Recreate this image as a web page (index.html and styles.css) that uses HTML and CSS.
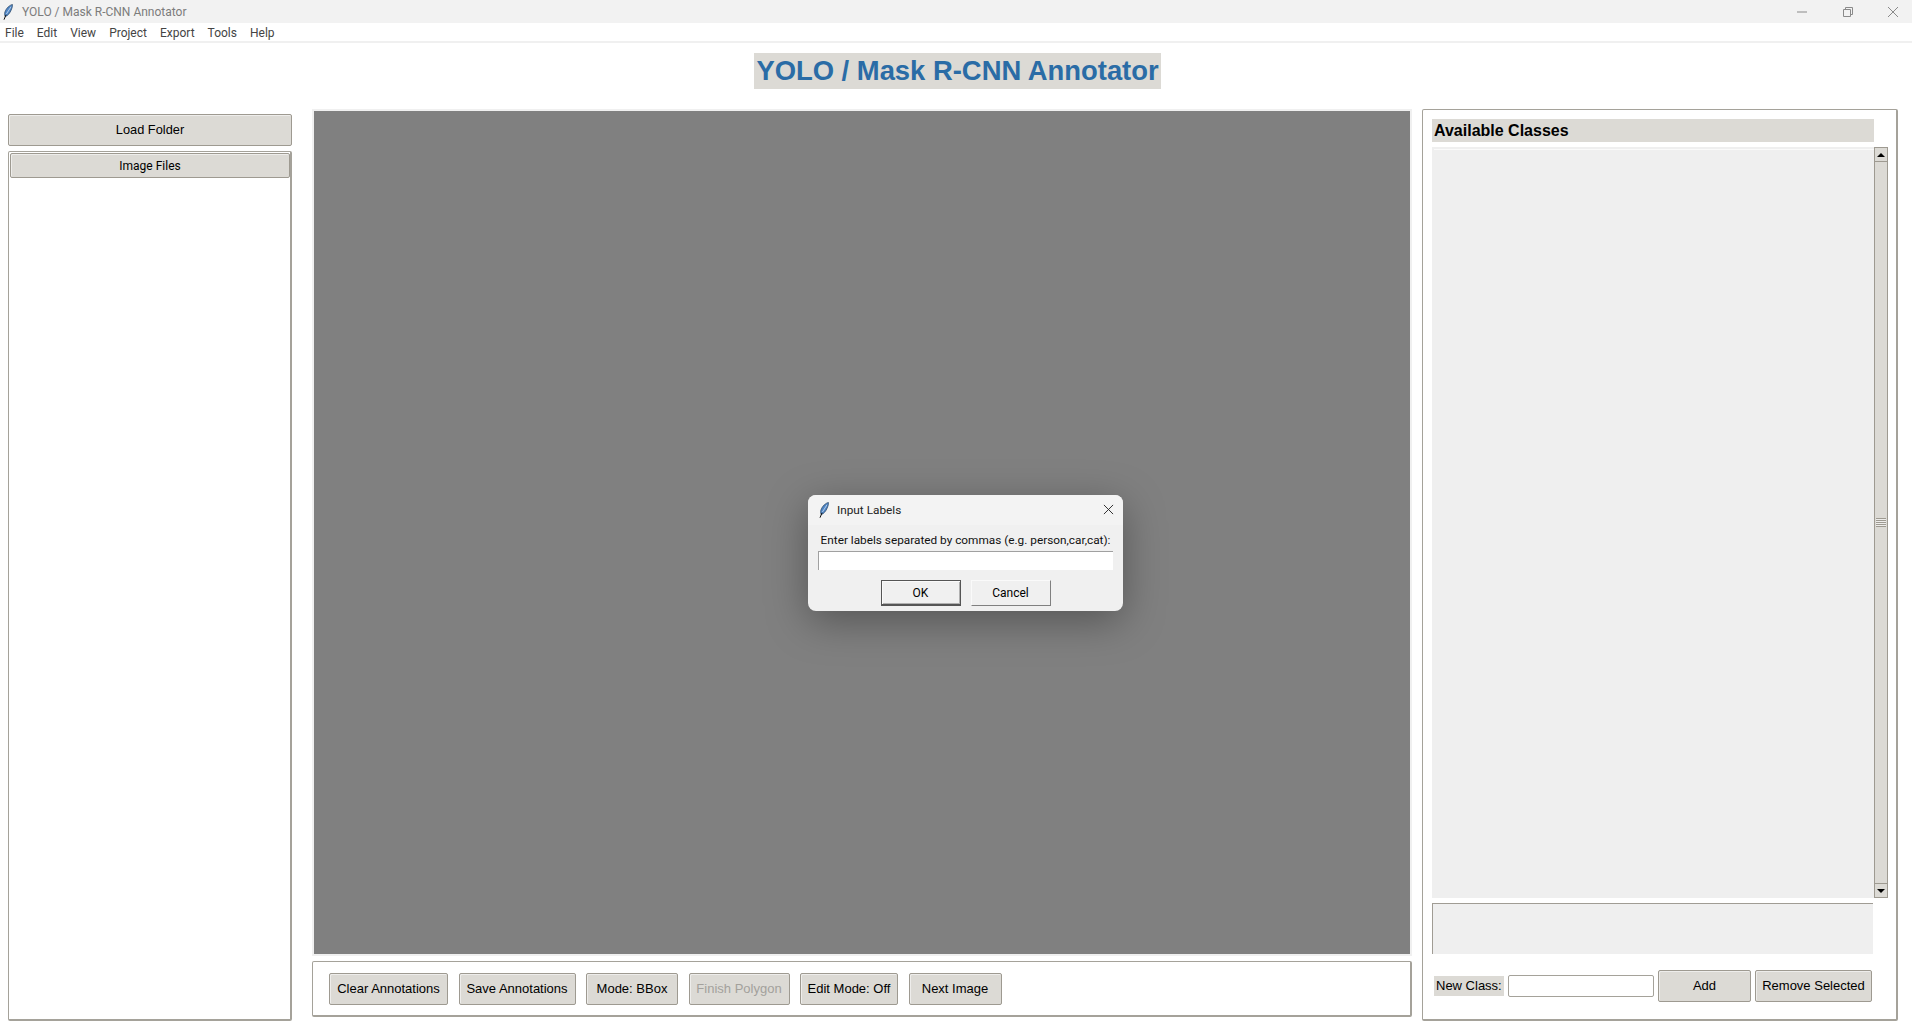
FILE: index.html
```html
<!DOCTYPE html>
<html lang="en">
<head>
    <meta charset="UTF-8">
    <meta name="viewport" content="width=device-width, initial-scale=1.0">
    <title>YOLO / Mask R-CNN Annotator</title>
    <link rel="stylesheet" href="styles.css">
</head>
<body>
    <!-- Window chrome -->
    <div class="titlebar">
        <svg class="feather" viewBox="0 0 10 16"><path d="M9.400 .4C6.600 1.200 3.200 4 1.900 8 1.400 10 1.500 11.500 2.300 12.600 4.800 11.800 7 9 8.200 6 9.200 3.600 9.700 1.700 9.400 .4z" fill="#4f86c6" stroke="#24405f" stroke-width=".7"/><path d="M8 2.800 3.400 10" stroke="#dfeaf6" stroke-width=".7" fill="none"/><path d="M1 15.700 3 10.800" stroke="#111" stroke-width="1" fill="none"/></svg>
        <span class="titlebar-text">YOLO / Mask R-CNN Annotator</span>
        <div class="window-controls">
            <svg viewBox="0 0 12 12"><path d="M1 6h10" stroke="#8a8a8a" fill="none"/></svg>
            <svg viewBox="0 0 12 12"><path d="M1.500 3.500h7v7h-7zM3.500 3.500v-2h7v7h-2" stroke="#8a8a8a" fill="none"/></svg>
            <svg viewBox="0 0 12 12"><path d="M1 1l10 10M11 1L1 11" stroke="#8a8a8a" fill="none"/></svg>
        </div>
    </div>
    <div class="menubar">
        <span>File</span><span>Edit</span><span>View</span><span>Project</span><span>Export</span><span>Tools</span><span>Help</span>
    </div>

    <div class="heading"><h1>YOLO / Mask R-CNN Annotator</h1></div>

    <div class="main">
        <!-- Left column -->
        <div class="left-col">
            <button class="btn load-btn">Load Folder</button>
            <div class="file-panel">
                <div class="btn file-head">Image Files</div>
            </div>
        </div>

        <!-- Canvas and toolbar -->
        <div class="center-col">
            <div class="canvas"></div>
            <div class="toolbar">
                <button class="btn tool-btn w-clear">Clear Annotations</button>
                <button class="btn tool-btn w-save">Save Annotations</button>
                <button class="btn tool-btn w-mode">Mode: BBox</button>
                <button class="btn tool-btn w-finish" disabled>Finish Polygon</button>
                <button class="btn tool-btn w-edit">Edit Mode: Off</button>
                <button class="btn tool-btn w-next">Next Image</button>
            </div>
        </div>

        <!-- Class panel -->
        <div class="right-col">
            <div class="classes-head">Available Classes</div>
            <div class="classes-row">
                <div class="classes-list"><div class="classes-inner"></div></div>
                <div class="scrollbar">
                    <div class="scroll-arrow"><span class="arrow-up"></span></div>
                    <div class="scroll-thumb"><span class="grip"></span></div>
                    <div class="scroll-arrow"><span class="arrow-down"></span></div>
                </div>
            </div>
            <div class="class-info"></div>
            <div class="add-row">
                <label class="new-label" for="newClass">New Class:</label>
                <input class="new-input" id="newClass" type="text">
                <button class="btn add-btn">Add</button>
                <button class="btn remove-btn">Remove Selected</button>
            </div>
        </div>
    </div>

    <!-- Dialog on top of the window -->
    <div class="dialog">
        <div class="dialog-title">
            <svg class="feather" viewBox="0 0 10 16"><path d="M9.400 .4C6.600 1.200 3.200 4 1.900 8 1.400 10 1.500 11.500 2.300 12.600 4.800 11.800 7 9 8.200 6 9.200 3.600 9.700 1.700 9.400 .4z" fill="#4f86c6" stroke="#24405f" stroke-width=".7"/><path d="M8 2.800 3.400 10" stroke="#dfeaf6" stroke-width=".7" fill="none"/><path d="M1 15.700 3 10.800" stroke="#111" stroke-width="1" fill="none"/></svg>
            <span class="dialog-title-text">Input Labels</span>
            <svg class="dialog-close" viewBox="0 0 12 12"><path d="M1 1l10 10M11 1L1 11" stroke="#222" fill="none"/></svg>
        </div>
        <div class="dialog-body">
            <div class="dialog-label">Enter labels separated by commas (e.g. person,car,cat):</div>
            <input class="dialog-input" type="text">
            <div class="dialog-buttons">
                <button class="win-btn win-default">OK</button>
                <button class="win-btn">Cancel</button>
            </div>
        </div>
    </div>
</body>
</html>
```

FILE: styles.css
```css
/* General */
html, body {
    margin: 0;
    padding: 0;
}

body {
    width: 1912px;
    height: 1026px;
    overflow: hidden;
    position: relative;
    background-color: #fff;
    font-family: "Liberation Sans", Arial, sans-serif;
    font-size: 13px;
    color: #000;
}

/* Title bar and menu */
.titlebar {
    height: 23px;
    background-color: #f2f2f2;
    display: flex;
    align-items: center;
}

.titlebar > .feather {
    width: 10px;
    height: 16px;
    margin-left: 3px;
}

.titlebar-text {
    margin-left: 9px;
    font-family: Roboto, sans-serif;
    font-size: 12px;
    color: #7c7c7c;
}

.window-controls {
    margin-left: auto;
    display: flex;
    gap: 33.500px;
    margin-right: 13px;
}

.window-controls svg {
    width: 12px;
    height: 12px;
}

.menubar {
    height: 17px;
    line-height: 18px;
    padding: 1px 0 0 5px;
    border-bottom: 2px solid #f0f0f0;
    display: flex;
    gap: 13px;
    font-family: Roboto, sans-serif;
    font-size: 12px;
    color: #444;
}

/* Heading */
.heading {
    height: 66px;
    padding-top: 10px;
    box-sizing: border-box;
    display: flex;
    justify-content: center;
}

.heading h1 {
    margin: 0 0 0 3px;
    height: 36px;
    line-height: 35px;
    padding: 0 2px;
    background-color: #dcdad5;
    color: #2a6ca6;
    font-size: 27.400px;
    font-weight: bold;
}

/* Columns */
.main {
    display: flex;
    height: 917px;
}

.left-col {
    width: 284px;
    margin-left: 8px;
    padding-top: 5px;
    display: flex;
    flex-direction: column;
    gap: 5px;
}

.center-col {
    width: 1100px;
    margin-left: 20px;
    display: flex;
    flex-direction: column;
    gap: 5px;
}

.right-col {
    width: 476px;
    height: 912px;
    margin-left: 10px;
    padding: 9px 0 0 9px;
    box-sizing: border-box;
    background-color: #fff;
    border: 1px solid #a5a29a;
    border-right-width: 2px;
    border-bottom-width: 2px;
    border-radius: 2px;
}

/* Buttons */
.btn {
    background-color: #dcdad5;
    border: 1px solid #9e9a91;
    border-radius: 2px;
    box-shadow: inset 1px 1px 0 #eeedeb;
    font-family: "Liberation Sans", Arial, sans-serif;
    font-size: 13px;
    color: #000;
    padding: 0;
    box-sizing: border-box;
}

.btn:disabled {
    color: #a3a19c;
}

.load-btn {
    height: 32px;
    padding-bottom: 2px;
    font-size: 12.800px;
}

.file-panel {
    height: 870px;
    box-sizing: border-box;
    padding: 1px 0 1px 1px;
    border: 1px solid #a5a29a;
    border-right-width: 2px;
    border-bottom-width: 2px;
    border-radius: 2px;
}

.file-head {
    height: 25px;
    line-height: 24px;
    text-align: center;
    font-family: Roboto, sans-serif;
    font-size: 12px;
}

/* Canvas */
.canvas {
    height: 847px;
    box-sizing: border-box;
    background-color: #808080;
    border: 2px solid #f0f0f0;
}

.toolbar {
    height: 56px;
    box-sizing: border-box;
    display: flex;
    align-items: flex-start;
    gap: 10.500px;
    padding: 11px 0 0 16px;
    border: 1px solid #a5a29a;
    border-bottom-width: 2px;
    border-right-width: 2px;
    border-radius: 2px;
}

.tool-btn {
    height: 32px;
    padding-bottom: 1px;
}

.w-clear { width: 119px; }
.w-save { width: 117px; }
.w-mode { width: 92px; }
.w-finish { width: 101px; }
.w-edit { width: 98px; }
.w-next { width: 93px; }

/* Class panel */
.classes-head {
    width: 442px;
    height: 23px;
    line-height: 23px;
    padding-left: 2px;
    box-sizing: border-box;
    background-color: #dcdad5;
    font-size: 16px;
    font-weight: bold;
}

.classes-row {
    display: flex;
    height: 751px;
    margin-top: 5px;
}

.classes-list {
    width: 442px;
    padding: 2px 0 0 2px;
    box-sizing: border-box;
    background-color: #efefef;
}

.classes-inner {
    height: 100%;
    border-top: 1px solid #fafafa;
}

.scrollbar {
    width: 14px;
    box-sizing: border-box;
    display: flex;
    flex-direction: column;
    background-color: #dcdad5;
    border: 1px solid #9e9a91;
}

.scroll-arrow {
    height: 13px;
    display: flex;
    align-items: center;
    justify-content: center;
    flex: none;
}

.arrow-up, .arrow-down {
    width: 0;
    height: 0;
    border-left: 4px solid transparent;
    border-right: 4px solid transparent;
}

.arrow-up { border-bottom: 4px solid #000; }
.arrow-down { border-top: 4px solid #000; }

.scroll-thumb {
    flex: 1;
    display: flex;
    align-items: center;
    justify-content: center;
    border-top: 1px solid #9e9a91;
    border-bottom: 1px solid #9e9a91;
}

.grip {
    width: 10px;
    height: 9px;
    background: repeating-linear-gradient(#9e9a91 0 1px, #eeedeb 1px 2px);
}

.class-info {
    width: 441px;
    height: 51px;
    margin-top: 5px;
    box-sizing: border-box;
    background-color: #efefef;
    border-top: 1px solid #a09c94;
    border-left: 1px solid #a09c94;
}

.add-row {
    display: flex;
    align-items: center;
    width: 440px;
    height: 32px;
    margin-top: 16px;
}

.new-label {
    width: 70px;
    height: 20px;
    line-height: 20px;
    margin-left: 2px;
    padding-left: 2px;
    box-sizing: border-box;
    background-color: #dcdad5;
    font-size: 13px;
}

.new-input {
    width: 146px;
    height: 22px;
    margin: 0 4px;
    padding: 0;
    box-sizing: border-box;
    border: 1px solid #a5a29a;
    border-radius: 2px;
    background-color: #fff;
}

.add-btn {
    width: 93px;
    height: 32px;
    margin-right: 4px;
    padding-bottom: 2px;
}

.remove-btn {
    width: 117px;
    height: 32px;
    padding-bottom: 2px;
}

/* Dialog */
.dialog {
    position: absolute;
    left: 808px;
    top: 495px;
    width: 315px;
    height: 116px;
    background-color: #f0f0f0;
    border-radius: 8px;
    box-shadow: 0 10px 42px rgba(0, 0, 0, 0.34);
    overflow: hidden;
    font-family: Roboto, sans-serif;
    font-size: 11.800px;
}

.dialog-title {
    height: 29px;
    padding-bottom: 1px;
    display: flex;
    align-items: center;
    padding-left: 11px;
    background-color: #f3f3f3;
    color: #222;
}

.dialog-title .feather {
    width: 10px;
    height: 16px;
}

.dialog-title-text {
    margin-left: 8px;
}

.dialog-close {
    width: 11px;
    height: 11px;
    margin-left: auto;
    margin-right: 9px;
}

.dialog-body {
    padding: 0 10px;
}

.dialog-label {
    height: 26px;
    line-height: 31px;
    text-align: center;
    color: #111;
}

.dialog-input {
    display: block;
    width: 295px;
    height: 19px;
    padding: 0;
    box-sizing: border-box;
    background-color: #fff;
    border: 0;
    border-top: 1px solid #a0a0a0;
    border-left: 1px solid #a0a0a0;
}

.dialog-buttons {
    display: flex;
    justify-content: center;
    gap: 10px;
    margin-top: 10px;
}

.win-btn {
    width: 80px;
    height: 26px;
    padding: 0;
    box-sizing: border-box;
    background-color: #f0f0f0;
    border: 1px solid;
    border-color: #fafafa #808080 #808080 #fafafa;
    font-family: Roboto, sans-serif;
    font-size: 12px;
    color: #000;
}

.win-default {
    border-color: #555;
    border-bottom-width: 2px;
    box-shadow: inset 1px 1px 0 #fafafa, inset -1px -1px 0 #b0b0b0;
}
```
